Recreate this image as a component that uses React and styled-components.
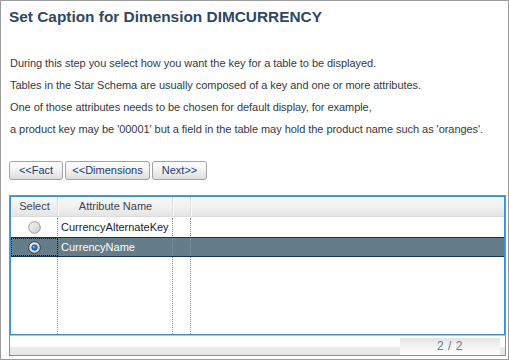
import React from "react";
import styled, { createGlobalStyle } from "styled-components";

const GlobalStyle = createGlobalStyle`
  html, body { margin: 0; padding: 0; background: #fff; }
  * { box-sizing: border-box; }
`;

const Page = styled.div`
  width: 509px;
  height: 360px;
  border: 1px solid #9c9c9c;
  padding: 6px 2px 2px 8px;
  display: flex;
  flex-direction: column;
  font-family: "Liberation Sans", Arial, sans-serif;
  background: #fff;
`;

const Title = styled.h1`
  margin: 0;
  font-size: 15.4px;
  line-height: 20px;
  font-weight: bold;
  color: #2e4763;
  font-family: "Liberation Sans", Arial, sans-serif;
`;

const Description = styled.div`
  margin-top: 25px;
  padding-left: 1px;
  display: flex;
  flex-direction: column;
`;

const Line = styled.p`
  margin: 0;
  font-size: 11px;
  line-height: 22px;
  letter-spacing: -0.05px;
  color: #333a44;
  white-space: nowrap;
`;

const ButtonBar = styled.div`
  margin-top: 21px;
  display: flex;
  gap: 2px;
`;

const NavButton = styled.button`
  width: ${(p) => p.$w}px;
  height: 19px;
  padding: 0;
  border: 1px solid #a2a2a2;
  border-radius: 3px;
  background: linear-gradient(#ffffff 0%, #f3f3f3 45%, #dedede 100%);
  font-family: "Liberation Sans", Arial, sans-serif;
  font-size: 11px;
  color: #1e3a72;
  line-height: 17px;
  text-align: center;
  cursor: pointer;
`;

const Frame = styled.div`
  margin-top: 15px;
  width: 497px;
  height: 161px;
  border: 1px solid #8d8d8d;
  display: flex;
  flex-direction: column;
`;

const Grid = styled.div`
  flex: 1;
  border: 1px solid #3a8fd0;
  display: flex;
  flex-direction: column;
  background: #fff;
`;

const cols = "47px 115px 18px 1fr";

const HeaderRow = styled.div`
  display: grid;
  grid-template-columns: ${cols};
  height: 20px;
  background: linear-gradient(#f7f7f7 0%, #f0f0f0 55%, #e4e4e4 100%);
  border-bottom: 1px solid #dcdcdc;
`;

const HeaderCell = styled.div`
  font-size: 11px;
  line-height: 19px;
  color: #3a4352;
  text-align: center;
  border-right: 1px solid ${(p) => (p.$last ? "transparent" : "#dedede")};
  border-left: 1px solid #fbfbfb;
`;

const Row = styled.div`
  display: grid;
  grid-template-columns: ${cols};
  height: 20px;
  background: ${(p) => (p.$selected ? "#657d88" : "#fff")};
  border-top: 1px solid ${(p) => (p.$selected ? "#12345a" : "transparent")};
  border-bottom: 1px solid ${(p) => (p.$selected ? "#12345a" : "transparent")};
  color: ${(p) => (p.$selected ? "#fff" : "#1b1b2e")};
`;

const Cell = styled.div`
  font-size: 11px;
  line-height: 18px;
  padding-left: 3px;
  border-right: 1px dotted ${(p) => (p.$last ? "transparent" : "#8a93a0")};
  white-space: nowrap;
  overflow: hidden;
`;

const RadioCell = styled.div`
  display: flex;
  align-items: center;
  justify-content: center;
  border-right: 1px dotted #8a93a0;
  outline: ${(p) => (p.$focus ? "1px dotted #0b0b0b" : "none")};
  outline-offset: -1px;
`;

const Filler = styled.div`
  flex: 1;
  display: grid;
  grid-template-columns: ${cols};
`;

const FillerCell = styled.div`
  border-right: 1px dotted ${(p) => (p.$last ? "transparent" : "#8a93a0")};
`;

const Footer = styled.div`
  height: 20px;
  border-top: 1px solid #b7c3cf;
  background: linear-gradient(#ffffff 0%, #ffffff 55%, #ececec 60%, #e6e6e6 100%);
  display: flex;
  justify-content: flex-end;
  padding: 2px 5px 0 0;
`;

const Pager = styled.div`
  width: 100px;
  height: 17px;
  background: linear-gradient(#e3e3e3 0%, #f4f4f4 50%, #ffffff 100%);
  font-size: 12px;
  line-height: 17px;
  text-align: center;
  color: #6b7a89;
  letter-spacing: 0.5px;
`;

function Radio({ checked }) {
  const id = checked ? "rg1" : "rg0";
  return (
    <svg width="13" height="13" viewBox="0 0 13 13">
      <defs>
        <linearGradient id={id} x1="0" y1="0" x2="1" y2="1">
          <stop offset="0" stopColor={checked ? "#f0f0f0" : "#fafafa"} />
          <stop offset="1" stopColor={checked ? "#c8c8c8" : "#c9c9c9"} />
        </linearGradient>
      </defs>
      <circle cx="6.5" cy="6.5" r="5.8" fill={`url(#${id})`} stroke={checked ? "#2b3a48" : "#9a9a9a"} strokeWidth="1" />
      {checked && <circle cx="6.5" cy="6.5" r="2.8" fill="#1f74c4" stroke="#0e3f78" strokeWidth="0.6" />}
      {checked && <circle cx="5.8" cy="5.8" r="0.9" fill="#9fd0ff" />}
    </svg>
  );
}

const rows = [
  { name: "CurrencyAlternateKey", selected: false },
  { name: "CurrencyName", selected: true },
];

export default function App() {
  return (
    <>
      <GlobalStyle />
      <Page>
        <Title>Set Caption for Dimension DIMCURRENCY</Title>
        <Description>
          <Line>During this step you select how you want the key for a table to be displayed.</Line>
          <Line>Tables in the Star Schema are usually composed of a key and one or more attributes.</Line>
          <Line>One of those attributes needs to be chosen for default display, for example,</Line>
          <Line>a product key may be '00001' but a field in the table may hold the product name such as 'oranges'.</Line>
        </Description>
        <ButtonBar>
          <NavButton $w={54}>&lt;&lt;Fact</NavButton>
          <NavButton $w={85}>&lt;&lt;Dimensions</NavButton>
          <NavButton $w={55}>Next&gt;&gt;</NavButton>
        </ButtonBar>
        <Frame>
          <Grid>
            <HeaderRow>
              <HeaderCell>Select</HeaderCell>
              <HeaderCell>Attribute Name</HeaderCell>
              <HeaderCell />
              <HeaderCell $last />
            </HeaderRow>
            {rows.map((r) => (
              <Row key={r.name} $selected={r.selected}>
                <RadioCell $focus={r.selected}>
                  <Radio checked={r.selected} />
                </RadioCell>
                <Cell>{r.name}</Cell>
                <Cell />
                <Cell $last />
              </Row>
            ))}
            <Filler>
              <FillerCell />
              <FillerCell />
              <FillerCell />
              <FillerCell $last />
            </Filler>
          </Grid>
          <Footer>
            <Pager>2 / 2</Pager>
          </Footer>
        </Frame>
      </Page>
    </>
  );
}
